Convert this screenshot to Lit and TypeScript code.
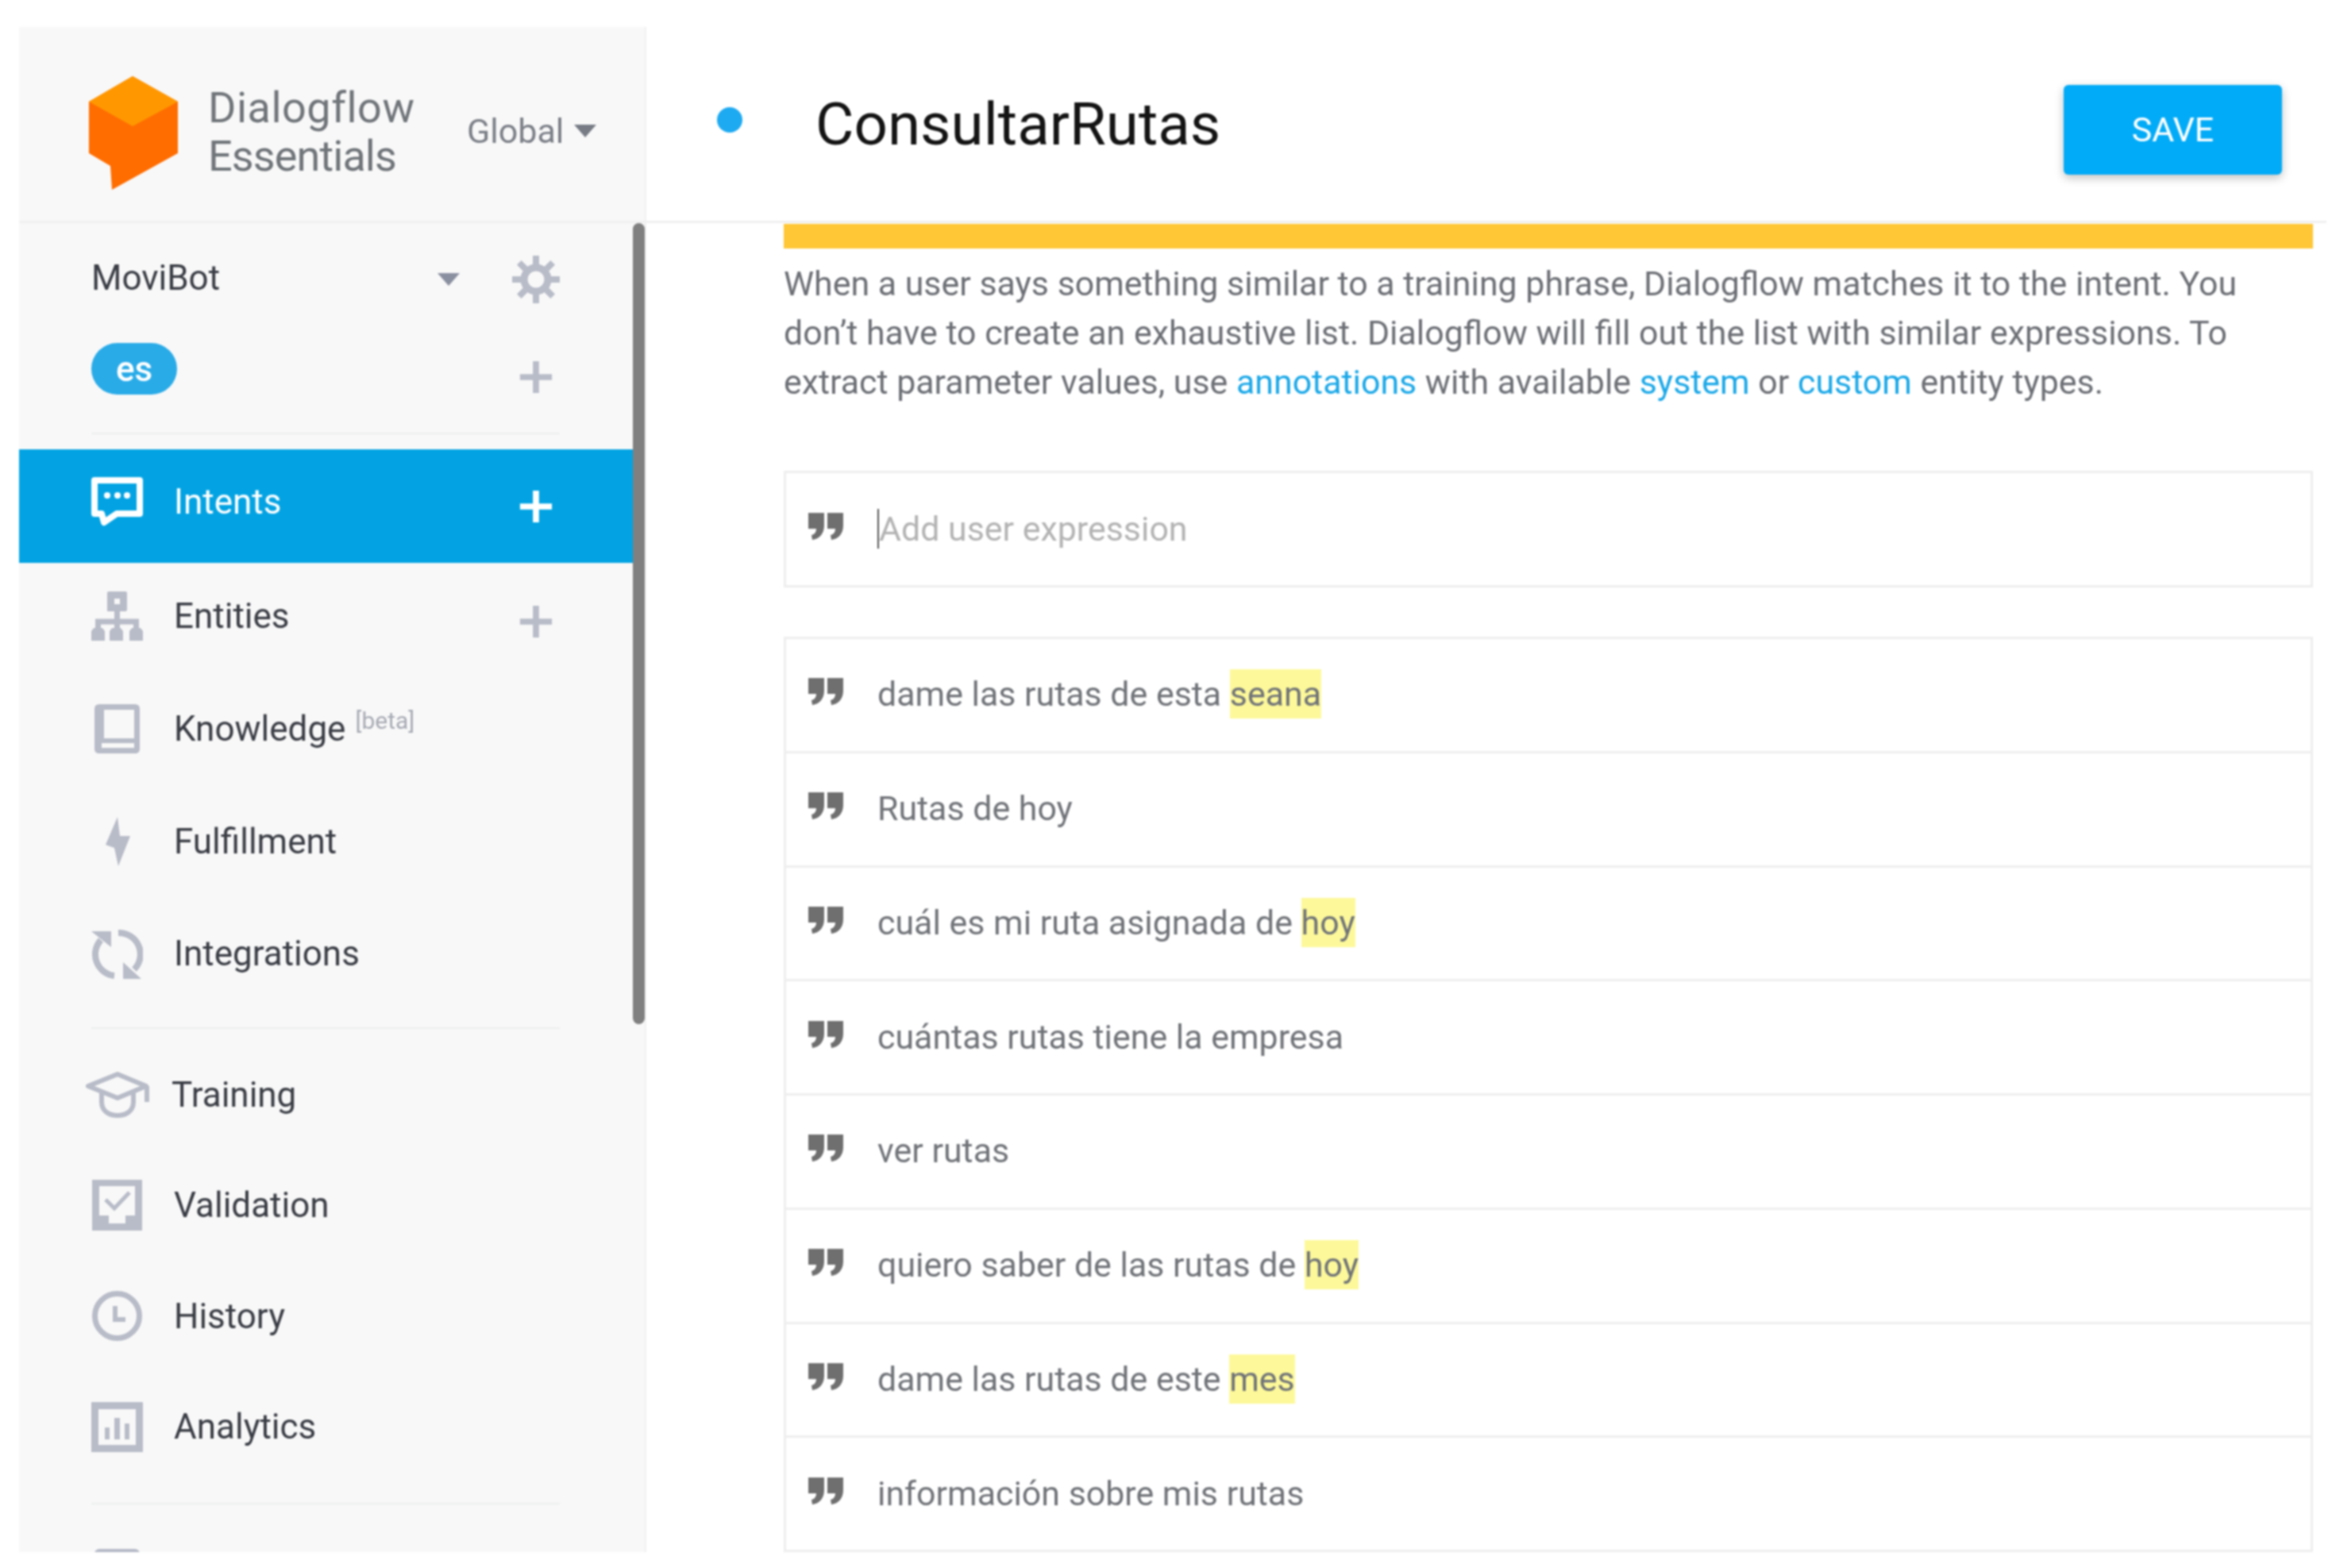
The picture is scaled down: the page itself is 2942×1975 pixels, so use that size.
import {css, html, LitElement, svg} from "lit";
import {customElement} from "lit/decorators.js";

const plus = html`<svg class="plus" viewBox="0 0 46 46"><path d="M23 2V44M2 23H44"></path></svg>`;

const icons = {
	intents: html`<svg width="65" height="62" viewBox="0 0 65 62">
		<path d="M4 4H61V46H32L16 57L13 46H4Z" fill="none" stroke="#fff" stroke-width="8" stroke-linejoin="round"></path>
		<circle cx="20" cy="23" r="4" fill="#fff"></circle>
		<circle cx="33" cy="23" r="4" fill="#fff"></circle>
		<circle cx="45" cy="23" r="4" fill="#fff"></circle>
	</svg>`,
	entities: html`<svg width="65" height="62" viewBox="0 0 65 62" fill="#b8bcc8">
		<path fill-rule="evenodd" d="M20 2Q20 0 22 0H43Q45 0 45 2V23Q45 25 43 25H20ZM29 9V16H36V9Z"></path>
		<path d="M32.5 25V48M8.5 48V38H56.5V48" fill="none" stroke="#b8bcc8" stroke-width="7"></path>
		<path d="M3 46H14L17 50V62H0V50ZM26 46H37L40 50V62H23V50ZM51 46H62L65 50V62H48V50Z"></path>
	</svg>`,
	knowledge: html`<svg width="57" height="62" viewBox="0 0 57 62" fill="#b8bcc8">
		<path fill-rule="evenodd" d="M6 0H51Q57 0 57 6V56Q57 62 51 62H6Q0 62 0 56V6Q0 0 6 0ZM12 7V43H50V7ZM9 49V55H50V49Z"></path>
	</svg>`,
	fulfillment: html`<svg width="34" height="62" viewBox="0 0 34 62" fill="#b8bcc8">
		<path d="M17 0L2 35L13 39L18 62L33 24L20 24Z"></path>
	</svg>`,
	integrations: html`<svg width="65" height="65" viewBox="0 0 65 65" fill="#b8bcc8">
		<path d="M29 59A27 27 0 0 1 12 14M34 5A27 27 0 0 1 54 51" fill="none" stroke="#b8bcc8" stroke-width="8"></path>
		<path d="M0 3H25V23ZM40 42V63H63Z"></path>
	</svg>`,
	training: html`<svg width="80" height="58" viewBox="0 0 80 58" fill="none" stroke="#b8bcc8" stroke-width="6" stroke-linejoin="round">
		<path d="M40 3L3 18L40 33L76 18Z"></path>
		<path d="M77 18V38"></path>
		<path d="M20 26V38C20 50 30 55 40 55C50 55 60 50 60 38V26"></path>
	</svg>`,
	validation: html`<svg width="63" height="64" viewBox="0 0 63 64" fill="#b8bcc8">
		<path fill-rule="evenodd" d="M0 0H63V64H0ZM9 8V45H21V55H42V45H54V8Z"></path>
		<path d="M17 25L28 36L47 16" fill="none" stroke="#b8bcc8" stroke-width="5"></path>
	</svg>`,
	history: html`<svg width="65" height="63" viewBox="0 0 65 63" fill="none" stroke="#b8bcc8">
		<circle cx="32.5" cy="31.5" r="28" stroke-width="7"></circle>
		<path d="M30 19V36H43" stroke-width="6"></path>
	</svg>`,
	analytics: html`<svg width="65" height="63" viewBox="0 0 65 63" fill="#b8bcc8">
		<path fill-rule="evenodd" d="M0 0H65V63H0ZM9 9V54H56V9Z"></path>
		<path d="M17 32H23V47H17ZM29 20H36V47H29ZM42 27H48V47H42Z"></path>
	</svg>`,
};

const gear = html`<svg width="62" height="62" viewBox="0 0 62 62" fill="none" stroke="#b8bcc8">
	<circle cx="32" cy="31" r="15" stroke-width="9"></circle>
	${[0, 45, 90, 135, 180, 225, 270, 315].map(a => svg`<path d="M32 12V1" stroke-width="8" transform=${"rotate(" + a + " 32 31)"}></path>`)}
</svg>`;

const quote = html`<svg class="quote" width="44" height="34" viewBox="0 0 44 34" fill="#6f6f6f">
	<path d="M0 0H20V16C20 26 14 33 5 34L4 28C8 27 10 24 10 20H0Z"></path>
	<path d="M24 0H44V16C44 26 38 33 29 34L28 28C32 27 34 24 34 20H24Z"></path>
</svg>`;

const phrases: [string, string][] = [
	["dame las rutas de esta ", "seana"],
	["Rutas de hoy", ""],
	["cuál es mi ruta asignada de ", "hoy"],
	["cuántas rutas tiene la empresa", ""],
	["ver rutas", ""],
	["quiero saber de las rutas de ", "hoy"],
	["dame las rutas de este ", "mes"],
	["información sobre mis rutas", ""],
];

@customElement("app-root")
export default class AppRoot extends LitElement {
	static styles = css`
		:host {
			display: block;
			width: 2942px;
			height: 1975px;
			background: #fff;
			font-family: Roboto, "Liberation Sans", sans-serif;
			filter: blur(0.8px);
		}

		.page {
			display: flex;
			box-sizing: border-box;
			height: 1975px;
			padding: 34px 12px 20px 24px;
		}

		/* sidebar */
		.side {
			position: relative;
			flex: none;
			box-sizing: border-box;
			width: 790px;
			height: 1921px;
			overflow: hidden;
			background: #f8f8f8;
			border-right: 2px solid #f0f0f0;
			font-size: 44px;
			color: #3a3d45;
		}

		.scrollbar {
			position: absolute;
			left: 773px;
			top: 247px;
			width: 15px;
			height: 1009px;
			border-radius: 8px;
			background: #808080;
		}

		.brand {
			display: flex;
			align-items: center;
			box-sizing: border-box;
			height: 247px;
			padding: 20px 0 0 88px;
			border-bottom: 3px solid #f0f0f0;
		}

		.logo {
			flex: none;
			margin: 4px 37px 0 0;
		}

		.wordmark {
			width: 326px;
			flex: none;
			font-size: 54px;
			line-height: 61px;
			color: #70757a;
		}

		.wordmark .top {
			letter-spacing: 0.5px;
		}

		.wordmark .bottom {
			letter-spacing: -0.9px;
		}

		.region {
			display: flex;
			align-items: center;
			gap: 13px;
			margin-bottom: 2px;
			color: #7b7f87;
			font-size: 43px;
		}

		.caret {
			flex: none;
			width: 0;
			height: 0;
			border-left: 14px solid transparent;
			border-right: 14px solid transparent;
			border-top: 16px solid #777c85;
		}

		.agent {
			display: flex;
			align-items: center;
			height: 62px;
			margin: 40px 0 0 91px;
		}

		.agent span {
			width: 436px;
			flex: none;
			margin-bottom: 4px;
		}

		.agent svg {
			flex: none;
		}

		.agent .caret {
			border-top-color: #8b90a0;
			margin-right: 64px;
		}

		.lang {
			display: flex;
			justify-content: space-between;
			width: 582px;
			height: 65px;
			margin: 49px 0 0 91px;
		}

		.pill {
			display: flex;
			align-items: center;
			justify-content: center;
			width: 108px;
			height: 65px;
			border-radius: 33px;
			background: #29abe8;
			color: #fff;
			font-weight: 500;
		}

		.plus {
			flex: none;
			width: 44px;
			height: 44px;
			fill: none;
			stroke: #b8bcc8;
			stroke-width: 8;
		}

		.lang .plus {
			margin-top: 21px;
		}

		.rule {
			width: 590px;
			height: 2px;
			margin-left: 91px;
			background: #eceded;
		}

		.nav {
			display: flex;
			align-items: center;
			width: 773px;
			box-sizing: border-box;
			padding: 0 100px 0 91px;
		}

		.nav .icon {
			display: flex;
			align-items: center;
			justify-content: center;
			flex: none;
			width: 65px;
			margin-right: 39px;
		}

		.nav .icon svg {
			flex: none;
		}

		.nav .plus {
			margin-left: auto;
			margin-top: 14px;
		}

		.nav.active {
			height: 143px;
			margin-top: 19px;
			padding-bottom: 11px;
			background: #03a3e3;
			color: #fff;
		}

		.nav.active .plus {
			stroke: #fff;
			margin-top: 12px;
		}

		.primary {
			margin-top: -4px;
		}

		.primary .nav {
			height: 142px;
		}

		.primary .nav:last-child span {
			margin-bottom: 3px;
		}

		.secondary {
			margin-top: 13px;
		}

		.secondary .nav {
			height: 139.5px;
		}

		.secondary .nav:first-child span {
			margin-left: -3px;
		}

		.beta {
			margin: 0 0 22px 12px;
			font-size: 30px;
			color: #a8abb5;
		}

		.cut {
			width: 57px;
			height: 20px;
			margin: 56px 0 0 95px;
			border-radius: 6px 6px 0 0;
			background: #b4b9c6;
		}

		/* main column */
		.main {
			flex: 1;
			min-width: 0;
			height: 1921px;
			overflow: hidden;
		}

		.head {
			display: flex;
			align-items: center;
			box-sizing: border-box;
			height: 247px;
			padding: 0 56px 0 89px;
			border-bottom: 3px solid #f0f0f0;
		}

		.dot {
			flex: none;
			width: 32px;
			height: 32px;
			margin: 0 92px 10px 0;
			border-radius: 50%;
			background: #1eaaf1;
		}

		h1 {
			flex: 1;
			margin: 0;
			font-size: 74.5px;
			font-weight: 400;
			color: #141414;
		}

		button {
			width: 275px;
			height: 113px;
			margin-top: 14px;
			border: 0;
			border-radius: 6px;
			background: #02abf7;
			color: #fff;
			font: 400 43px Roboto, "Liberation Sans", sans-serif;
			box-shadow: 0 4px 12px rgba(0, 0, 0, 0.25);
		}

		.content {
			padding: 0 17px 0 173px;
		}

		.warn {
			height: 31px;
			margin-top: 1px;
			background: #ffc636;
		}

		.desc {
			margin: 13px 0 0;
			font-size: 42.9px;
			line-height: 62px;
			color: #6c6f75;
			white-space: nowrap;
		}

		.desc a {
			color: #1aa8e8;
		}

		.box {
			border: 3px solid #eeeeee;
			border-bottom: 0;
		}

		.adder {
			margin-top: 81px;
			border-bottom: 3px solid #eeeeee;
		}

		.list {
			margin-top: 62px;
		}

		.row {
			display: flex;
			align-items: center;
			box-sizing: border-box;
			height: 143.75px;
			padding-left: 28px;
			font-size: 42.9px;
			color: #707378;
			border-bottom: 3px solid #eeeeee;
		}

		.row > span {
			margin-bottom: 2px;
		}

		.row.bare {
			height: 141px;
			border-bottom: 0;
		}

		.quote {
			flex: none;
			margin: 0 43px 8px 0;
		}

		.mark {
			display: inline-block;
			line-height: 62px;
			background: #fdf99a;
		}

		.placeholder {
			border-left: 2px solid #555;
			line-height: 50px;
			color: #b3b3b3;
		}
	`;

	render() {
		return html`
			<div class="page">
				<div class="side">
					<div class="brand">
						<svg class="logo" width="113" height="144" viewBox="0 0 113 144">
							<path d="M55 0L112 32V97L29 143L27 113L0 97V32Z" fill="#ff6d00"></path>
							<path d="M55 0L112 32L55 63L0 32Z" fill="#ff9800"></path>
						</svg>
						<div class="wordmark"><span class="top">Dialogflow</span><br><span class="bottom">Essentials</span></div>
						<div class="region">Global<i class="caret"></i></div>
					</div>
					<div class="agent"><span>MoviBot</span><i class="caret"></i>${gear}</div>
					<div class="lang"><div class="pill">es</div>${plus}</div>
					<div class="rule" style="margin-top:48px"></div>
					<div class="nav active"><div class="icon">${icons.intents}</div>Intents${plus}</div>
					<div class="primary">
						<div class="nav"><div class="icon">${icons.entities}</div>Entities${plus}</div>
						<div class="nav"><div class="icon">${icons.knowledge}</div>Knowledge<span class="beta">[beta]</span></div>
						<div class="nav"><div class="icon">${icons.fulfillment}</div>Fulfillment</div>
						<div class="nav"><div class="icon">${icons.integrations}</div><span>Integrations</span></div>
					</div>
					<div class="rule" style="margin-top:21px"></div>
					<div class="secondary">
						<div class="nav"><div class="icon">${icons.training}</div><span>Training</span></div>
						<div class="nav"><div class="icon">${icons.validation}</div>Validation</div>
						<div class="nav"><div class="icon">${icons.history}</div>History</div>
						<div class="nav"><div class="icon">${icons.analytics}</div>Analytics</div>
					</div>
					<div class="rule" style="margin-top:26px"></div>
					<div class="cut"></div>
					<div class="scrollbar"></div>
				</div>
				<div class="main">
					<div class="head">
						<div class="dot"></div>
						<h1>ConsultarRutas</h1>
						<button>SAVE</button>
					</div>
					<div class="content">
						<div class="warn"></div>
						<p class="desc">When a user says something similar to a training phrase, Dialogflow matches it to the intent. You<br>don’t have to create an exhaustive list. Dialogflow will fill out the list with similar expressions. To<br>extract parameter values, use <a>annotations</a> with available <a>system</a> or <a>custom</a> entity types.</p>
						<div class="box adder">
							<div class="row bare">${quote}<span class="placeholder">Add user expression</span></div>
						</div>
						<div class="box list">
							${phrases.map(([text, mark]) => html`
								<div class="row">${quote}<span>${text}${mark ? html`<span class="mark">${mark}</span>` : ""}</span></div>
							`)}
						</div>
					</div>
				</div>
			</div>
		`;
	}
}

declare global {
	interface HTMLElementTagNameMap {
		"app-root": AppRoot;
	}
}
